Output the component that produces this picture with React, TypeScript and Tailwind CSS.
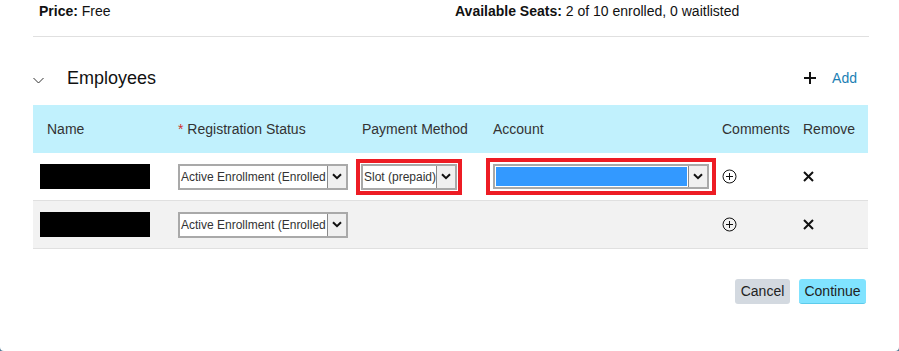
import React from "react";

const font = { fontFamily: '"Liberation Sans", Arial, sans-serif' };

function Chevron({ className = "" }: { className?: string }) {
  return (
    <svg width="10" height="7" viewBox="0 0 10 7" className={className}>
      <path d="M1 1.2 L5 5.2 L9 1.2" fill="none" stroke="#111" strokeWidth="2" />
    </svg>
  );
}

function FakeSelect({
  text,
  width,
  fill = false,
  height = 26,
}: {
  text?: string;
  width: number;
  fill?: boolean;
  height?: number;
}) {
  return (
    <div
      className="flex border-2 border-[#a9a9a9] bg-white"
      style={{ width, height }}
    >
      <div className="flex min-w-0 flex-1 items-center overflow-hidden p-[1px]">
        {fill ? (
          <div className="h-full w-full bg-[#3399ff]" />
        ) : (
          <span className="whitespace-nowrap text-[12px] text-[#333]">{text}</span>
        )}
      </div>
      <div className="flex w-[19px] shrink-0 items-center justify-center border-l border-[#8a8a8a] bg-[#f0f0f0]">
        <Chevron />
      </div>
    </div>
  );
}

function CirclePlus() {
  return (
    <svg width="15" height="15" viewBox="0 0 15 15">
      <circle cx="7.5" cy="7.5" r="6.5" fill="none" stroke="#111" strokeWidth="1" />
      <path d="M7.5 4 V11 M4 7.5 H11" stroke="#111" strokeWidth="1" />
    </svg>
  );
}

function Cross() {
  return (
    <svg width="11" height="11" viewBox="0 0 11 11">
      <path d="M1 1 L10 10 M10 1 L1 10" stroke="#111" strokeWidth="2" />
    </svg>
  );
}

const cols = "grid grid-cols-[145px_178px_130px_236px_81px_65px]";

function EmployeeRow({ striped, payment }: { striped?: boolean; payment?: boolean }) {
  return (
    <div
      className={`${cols} h-[48px] items-center border-b border-[#e0e0e0] ${
        striped ? "bg-[#f2f2f2]" : "bg-white"
      }`}
    >
      <div className="pl-[7px]">
        <div className="h-[25px] w-[110px] bg-black" />
      </div>
      <div>
        <FakeSelect text="Active Enrollment (Enrolled" width={170} />
      </div>
      <div>
        {payment && (
          <div className="w-[106px] border-4 border-[#ed1c24] p-[1px]">
            <FakeSelect text="Slot (prepaid)" width={96} />
          </div>
        )}
      </div>
      <div>
        {payment && (
          <div className="w-[230px] border-4 border-[#ed1c24] py-[2px] pl-[3px] pr-[2px]">
            <FakeSelect fill width={216} height={25} />
          </div>
        )}
      </div>
      <div className="flex">
        <CirclePlus />
      </div>
      <div className="flex">
        <Cross />
      </div>
    </div>
  );
}

export default function App() {
  return (
    <div className="h-[351px] w-[899px] bg-[#4c7894]" style={font}>
      <div className="flex h-full flex-col rounded-b-[4px] bg-white pl-[33px] pr-[30px] text-[#111]">
        <div className="flex h-[37px] border-b border-[#e0e0e0] pt-[1px] text-[14px]">
          <div className="w-[422px] pl-[6px]">
            <span className="font-bold">Price:</span> Free
          </div>
          <div>
            <span className="font-bold">Available Seats:</span> 2 of 10 enrolled, 0 waitlisted
          </div>
        </div>

        <div className="mt-[23px] flex h-[36px] items-center">
          <svg width="11" height="7" viewBox="0 0 11 7" className="mt-[4px]">
            <path d="M0.5 1 L5.5 6 L10.5 1" fill="none" stroke="#333" strokeWidth="1" />
          </svg>
          <span className="ml-[23px] text-[18px] text-[#111]">Employees</span>
          <div className="ml-auto mr-[12px] flex items-center">
            <svg width="12" height="12" viewBox="0 0 12 12">
              <path d="M6 0 V12 M0 6 H12" stroke="#111" strokeWidth="2" />
            </svg>
            <span className="ml-[16px] text-[14px] text-[#1c7fb4]">Add</span>
          </div>
        </div>

        <div className="mt-[9px] w-[835px]">
          <div className={`${cols} h-[48px] items-center bg-[#c1f1fd] pt-[1px] text-[14px] text-[#333]`}>
            <div className="pl-[14px]">Name</div>
            <div>
              <span className="text-[#d0312d]">*</span> Registration Status
            </div>
            <div className="pl-[6px]">Payment Method</div>
            <div className="pl-[7px]">Account</div>
            <div>Comments</div>
            <div>Remove</div>
          </div>
          <EmployeeRow payment />
          <EmployeeRow striped />
        </div>

        <div className="mt-[30px] flex w-[835px] justify-end gap-[9px] pr-[2px] text-[14px] text-[#222]">
          <button className="h-[25px] w-[55px] rounded-[3px] bg-[#d3d9e0]">Cancel</button>
          <button className="h-[25px] w-[67px] rounded-[3px] border-b border-[#5ccbeb] bg-[#80e3ff]">
            Continue
          </button>
        </div>
      </div>
    </div>
  );
}
